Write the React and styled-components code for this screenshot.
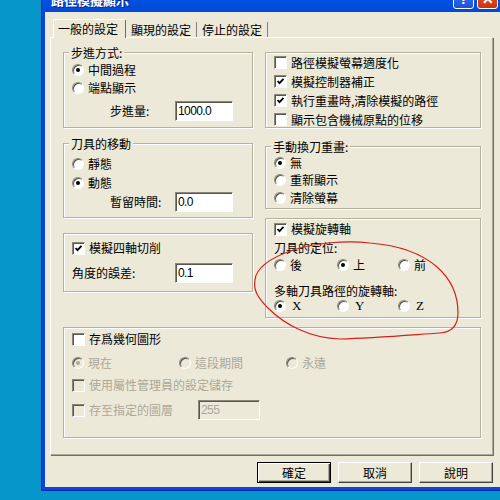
import React from 'react';
import styled, { createGlobalStyle } from 'styled-components';

const GlobalStyle = createGlobalStyle`
  html, body {
    margin: 0;
    padding: 0;
    width: 500px;
    height: 500px;
    overflow: hidden;
    background: #0796c9;
  }
  body {
    font-family: "Noto Sans CJK TC", "Noto Sans", sans-serif;
    font-size: 12px;
  }
`;

const Desktop = styled.div`
  position: relative;
  width: 500px;
  height: 500px;
  overflow: hidden;
  background: #0796c9;
`;

const Window = styled.div`
  position: absolute;
  left: 42px;
  top: -19px;
  width: 470px;
  height: 509px;
  box-sizing: border-box;
  display: flex;
  flex-direction: column;
  background: #ece9d8;
  border-left: 3px solid #0b45dc;
  border-bottom: 3px solid #0b45dc;
  box-shadow: -1px 1px 0 #0026a8;
`;

const TitleBar = styled.div`
  height: 31px;
  flex-shrink: 0;
  box-sizing: border-box;
  display: flex;
  align-items: flex-end;
  gap: 3px;
  padding: 0 14px 3px 3px;
  margin-left: -3px;
  background: linear-gradient(#0a62f0, #0055e5 45%, #0049d6);
`;

const TitleText = styled.div`
  flex: 1;
  color: #fff;
  font-weight: bold;
  font-size: 13px;
  line-height: 15px;
  margin: 0 0 2px 6px;
  text-shadow: 1px 1px 0 #0a2a90;
`;

const TitleButton = styled.div`
  width: 21px;
  height: 21px;
  box-sizing: border-box;
  border: 1px solid #fff;
  border-radius: 3px;
  display: flex;
  align-items: center;
  justify-content: center;
  color: #fff;
  font-family: "Liberation Sans", sans-serif;
  font-weight: bold;
  font-size: 14px;
  background: ${p => (p.$close
    ? 'linear-gradient(#ec8a66, #d9441c 60%, #c7370f)'
    : 'linear-gradient(#4f8cf7, #2763e3 60%, #1c53d2)')};
`;

const Body = styled.div`
  flex: 1;
  padding: 7px 0 0 5px;
`;

const TabStrip = styled.div`
  position: relative;
  z-index: 1;
  display: flex;
  align-items: flex-end;
  height: 18px;
  padding-left: 3px;
`;

const Tab = styled.div`
  box-sizing: border-box;
  display: flex;
  align-items: center;
  line-height: 14px;
  color: #000;
  ${p => (p.$active
    ? `
    height: 19px;
    margin-bottom: -1px;
    padding: 0 7px 0 4px;
    background: #ece9d8;
    border-top: 1px solid #fff;
    border-left: 1px solid #fff;
    border-right: 1px solid #716f64;
    border-radius: 2px 2px 0 0;
  `
    : `
    height: 15px;
    padding: 0 5px 0 5px;
    border-right: 1px solid #808080;
  `)}
`;

const Panel = styled.div`
  box-sizing: border-box;
  width: 443px;
  height: 418px;
  padding: 14px 11px 0 12px;
  border-top: 1px solid #fff;
  border-left: 1px solid #fff;
  border-right: 1px solid #aca899;
  border-bottom: 1px solid #aca899;
  box-shadow: 1px 1px 0 #716f64;
`;

const Columns = styled.div`
  display: grid;
  grid-template-columns: 190px 216px;
  column-gap: 12px;
  align-items: start;
`;

const Column = styled.div`
  display: flex;
  flex-direction: column;
`;

const Group = styled.div`
  position: relative;
  box-sizing: border-box;
  height: ${p => p.$h}px;
  margin-top: ${p => p.$mt || 0}px;
  padding: ${p => p.$pt || 0}px 8px 0 8px;
  border: 1px solid #b5b29f;
  box-shadow: inset 1px 1px 0 #fff, 1px 1px 0 #fff;
`;

const Legend = styled.span`
  position: absolute;
  top: -8px;
  left: 5px;
  padding: 0 2px;
  line-height: 15px;
  background: #ece9d8;
  color: #000;
`;

const Row = styled.div`
  display: flex;
  align-items: center;
  height: ${p => p.$h || 18}px;
  margin-top: ${p => p.$mt || 0}px;
  color: #000;
`;

const RadioGrid = styled.div`
  display: grid;
  grid-template-columns: ${p => p.$cols};
  align-items: center;
  height: ${p => p.$h || 18}px;
  margin-top: ${p => p.$mt || 0}px;
`;

const OptionLabel = styled.label`
  display: flex;
  align-items: center;
  gap: 4px;
  line-height: 14px;
  white-space: nowrap;
  color: ${p => (p.$disabled ? '#aca899' : '#000')};
`;

const OptionText = styled.span`
  font-family: ${p => (p.$latin
    ? '"Liberation Serif", serif'
    : '"Noto Sans CJK TC", "Noto Sans", sans-serif')};
  font-size: ${p => (p.$latin ? '13px' : '12px')};
  margin-left: ${p => (p.$latin ? '2px' : '0')};
`;

const RadioMark = styled.span`
  position: relative;
  flex-shrink: 0;
  width: 12px;
  height: 12px;
  box-sizing: border-box;
  border-radius: 50%;
  border: 1px solid;
  border-color: #8a877a #fff #fff #8a877a;
  background: ${p => (p.$disabled ? '#ece9d8' : '#fff')};
  box-shadow: inset 1px 1px 0 #5a584e;

  &::after {
    content: '';
    display: ${p => (p.$checked ? 'block' : 'none')};
    position: absolute;
    left: 3px;
    top: 3px;
    width: 4px;
    height: 4px;
    border-radius: 50%;
    background: ${p => (p.$disabled ? '#aca899' : '#000')};
  }
`;

const CheckMark = styled.span`
  flex-shrink: 0;
  width: 13px;
  height: 13px;
  box-sizing: border-box;
  display: flex;
  align-items: center;
  justify-content: center;
  border: 1px solid;
  border-color: #8a877a #fff #fff #8a877a;
  background: ${p => (p.$disabled ? '#ece9d8' : '#fff')};
  box-shadow: inset 1px 1px 0 #5a584e;
`;

const FieldRow = styled.div`
  display: grid;
  grid-template-columns: ${p => p.$labelW}px ${p => p.$inputW}px;
  align-items: center;
  height: 20px;
  margin-top: ${p => p.$mt || 0}px;
`;

const FieldLabel = styled.span`
  padding-left: ${p => p.$indent || 0}px;
  line-height: 14px;
  color: #000;
`;

const TextBox = styled.div`
  box-sizing: border-box;
  height: 20px;
  display: flex;
  align-items: center;
  padding-left: 2px;
  border: 1px solid;
  border-color: #8a877a #fff #fff #8a877a;
  box-shadow: inset 1px 1px 0 #5a584e;
  background: ${p => (p.$disabled ? '#ece9d8' : '#fff')};
  color: ${p => (p.$disabled ? '#aca899' : '#000')};
  font-family: "Liberation Sans", sans-serif;
  font-size: 12px;
  letter-spacing: -0.6px;
`;

const ButtonRow = styled.div`
  width: 443px;
  display: flex;
  justify-content: flex-end;
  gap: 7px;
  margin-top: 7px;
`;

const Button = styled.div`
  box-sizing: border-box;
  width: 74px;
  height: 21px;
  display: flex;
  align-items: center;
  justify-content: center;
  color: #000;
  line-height: 14px;
  background: #ece9d8;
  border: 1px solid;
  ${p => (p.$default
    ? `
    border-color: #000;
    box-shadow: inset 1px 1px 0 #fff, inset -1px -1px 0 #404040, inset -2px -2px 0 #aca899;
  `
    : `
    border-color: #fff #404040 #404040 #fff;
    box-shadow: inset -1px -1px 0 #aca899;
  `)}
`;

const Scribble = styled.svg`
  position: absolute;
  left: 0;
  top: 0;
  width: 500px;
  height: 500px;
  pointer-events: none;
`;

const Tick = () => (
  <svg width="9" height="9" viewBox="0 0 9 9">
    <polyline points="1.5,4 3.5,6.2 7.5,1.8" fill="none" stroke="#000" strokeWidth="1.8" />
  </svg>
);

const Option = ({ check, checked, disabled, latin, children }) => (
  <OptionLabel $disabled={disabled}>
    {check ? (
      <CheckMark $disabled={disabled}>{checked && <Tick />}</CheckMark>
    ) : (
      <RadioMark $checked={checked} $disabled={disabled} />
    )}
    <OptionText $latin={latin}>{children}</OptionText>
  </OptionLabel>
);

const App = () => (
  <Desktop>
    <GlobalStyle />
    <Window>
      <TitleBar>
        <TitleText>路徑模擬顯示</TitleText>
        <TitleButton>?</TitleButton>
        <TitleButton $close>✕</TitleButton>
      </TitleBar>
      <Body>
        <TabStrip>
          <Tab $active>一般的設定</Tab>
          <Tab>顯現的設定</Tab>
          <Tab>停止的設定</Tab>
        </TabStrip>
        <Panel>
          <Columns>
            <Column>
              <Group $h={76} $pt={8}>
                <Legend>步進方式:</Legend>
                <Row><Option checked>中間過程</Option></Row>
                <Row><Option>端點顯示</Option></Row>
                <FieldRow $labelW={103} $inputW={58} $mt={4}>
                  <FieldLabel $indent={38}>步進量:</FieldLabel>
                  <TextBox>1000.0</TextBox>
                </FieldRow>
              </Group>
              <Group $h={75} $pt={10} $mt={15}>
                <Legend>刀具的移動</Legend>
                <Row $h={19}><Option>靜態</Option></Row>
                <Row $h={19}><Option checked>動態</Option></Row>
                <FieldRow $labelW={103} $inputW={58}>
                  <FieldLabel $indent={38}>暫留時間:</FieldLabel>
                  <TextBox>0.0</TextBox>
                </FieldRow>
              </Group>
              <Group $h={59} $pt={5} $mt={15}>
                <Row><Option check checked>模擬四軸切削</Option></Row>
                <FieldRow $labelW={103} $inputW={58} $mt={6}>
                  <FieldLabel>角度的誤差:</FieldLabel>
                  <TextBox>0.1</TextBox>
                </FieldRow>
              </Group>
            </Column>
            <Column>
              <Group $h={76}>
                <Row $h={19}><Option check>路徑模擬螢幕適度化</Option></Row>
                <Row $h={19}><Option check checked>模擬控制器補正</Option></Row>
                <Row $h={19}><Option check checked>執行重畫時,清除模擬的路徑</Option></Row>
                <Row $h={19}><Option check>顯示包含機械原點的位移</Option></Row>
              </Group>
              <Group $h={63} $pt={7} $mt={18}>
                <Legend>手動換刀重畫:</Legend>
                <Row $h={17.5}><Option checked>無</Option></Row>
                <Row $h={17.5}><Option>重新顯示</Option></Row>
                <Row $h={17.5}><Option>清除螢幕</Option></Row>
              </Group>
              <Group $h={100} $pt={1} $mt={9}>
                <Row><Option check checked>模擬旋轉軸</Option></Row>
                <Row>刀具的定位:</Row>
                <RadioGrid $cols="63px 61px auto">
                  <Option>後</Option>
                  <Option checked>上</Option>
                  <Option>前</Option>
                </RadioGrid>
                <Row $h={16} $mt={8}>多軸刀具路徑的旋轉軸:</Row>
                <RadioGrid $cols="63px 61px auto" $h={16}>
                  <Option checked latin>X</Option>
                  <Option latin>Y</Option>
                  <Option latin>Z</Option>
                </RadioGrid>
              </Group>
            </Column>
          </Columns>
          <Group $h={111} $pt={2} $mt={9}>
            <Row><Option check>存爲幾何圖形</Option></Row>
            <RadioGrid $cols="107px 107px auto" $mt={6}>
              <Option checked disabled>現在</Option>
              <Option disabled>這段期間</Option>
              <Option disabled>永遠</Option>
            </RadioGrid>
            <Row $mt={4}><Option check disabled>使用屬性管理員的設定儲存</Option></Row>
            <FieldRow $labelW={126} $inputW={62} $mt={6}>
              <Option check disabled>存至指定的圖層</Option>
              <TextBox $disabled>255</TextBox>
            </FieldRow>
          </Group>
        </Panel>
        <ButtonRow>
          <Button $default>確定</Button>
          <Button>取消</Button>
          <Button>說明</Button>
        </ButtonRow>
      </Body>
    </Window>
    <Scribble viewBox="0 0 500 500">
      <path
        d="M255 280 C256 268 270 258 293 250 C315 243 345 240 370 243 C395 245 420 252 437 267 C452 280 458 295 458 313 C458 325 452 332 440 333 C410 335 375 338 340 339 C310 338 285 325 268 308 C258 298 253 290 255 280 Z"
        fill="none"
        stroke="#d42020"
        strokeWidth="1.2"
      />
    </Scribble>
  </Desktop>
);

export default App;
